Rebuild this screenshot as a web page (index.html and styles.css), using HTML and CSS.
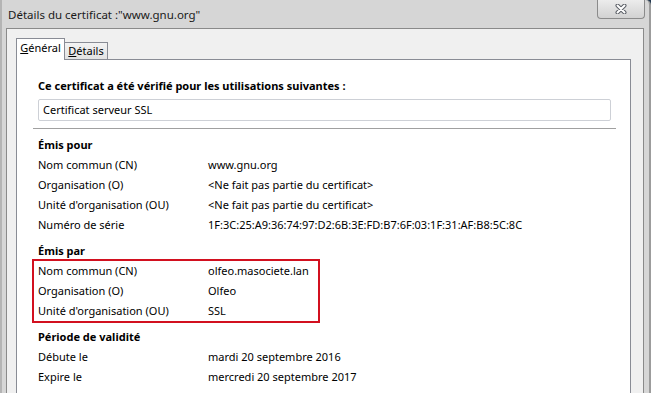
FILE: index.html
```html
<!DOCTYPE html>
<html>
  <head>
    <meta charset="UTF-8">
    <link rel="stylesheet" href="styles.css">
  </head>
  <body>
    <div class="window">
      <div class="titlebar">
        <span class="title">Détails du certificat :"www.gnu.org"</span>
        <div class="close">
          <svg width="12" height="10" viewBox="0 0 12 10">
            <path d="M2.5 1.5 L9.5 8.5 M9.5 1.5 L2.5 8.5" stroke="#5b5f66" stroke-width="4" stroke-linecap="round"/>
            <path d="M2.5 1.5 L9.5 8.5 M9.5 1.5 L2.5 8.5" stroke="#fff" stroke-width="2" stroke-linecap="round"/>
          </svg>
        </div>
      </div>

      <div class="client">
        <div class="tabs">
          <div class="tab active"><u>G</u>énéral</div>
          <div class="tab"><u>D</u>étails</div>
        </div>

        <div class="panel">
          <h3>Ce certificat a été vérifié pour les utilisations suivantes :</h3>
          <div class="usage">Certificat serveur SSL</div>
          <hr class="sep">

          <div class="group">
            <h3>Émis pour</h3>
            <div class="row"><span class="label">Nom commun (CN)</span><span>www.gnu.org</span></div>
            <div class="row"><span class="label">Organisation (O)</span><span>&lt;Ne fait pas partie du certificat&gt;</span></div>
            <div class="row"><span class="label">Unité d'organisation (OU)</span><span>&lt;Ne fait pas partie du certificat&gt;</span></div>
            <div class="row"><span class="label">Numéro de série</span><span>1F:3C:25:A9:36:74:97:D2:6B:3E:FD:B7:6F:03:1F:31:AF:B8:5C:8C</span></div>
          </div>

          <div class="group">
            <h3>Émis par</h3>
            <div class="highlight">
              <div class="row"><span class="label">Nom commun (CN)</span><span>olfeo.masociete.lan</span></div>
              <div class="row"><span class="label">Organisation (O)</span><span>Olfeo</span></div>
              <div class="row"><span class="label">Unité d'organisation (OU)</span><span>SSL</span></div>
            </div>
          </div>

          <div class="group">
            <h3>Période de validité</h3>
            <div class="row"><span class="label">Débute le</span><span>mardi 20 septembre 2016</span></div>
            <div class="row"><span class="label">Expire le</span><span>mercredi 20 septembre 2017</span></div>
          </div>
        </div>
      </div>
    </div>
  </body>
</html>
```

FILE: styles.css
```css
html, body {
  margin: 0;
  height: 100%;
}
body {
  background-color: #22384f;
  font-family: "Noto Sans", "Open Sans", sans-serif;
  font-size: 11px;
  color: #000;
}

.window {
  width: 651px;
  height: 393px;
  box-sizing: border-box;
  background-color: #d6d6d6;
  border-left: 2px solid #b4b4b4;
  border-right: 2px solid #9c9c9c;
  border-top-right-radius: 5px;
  overflow: hidden;
  display: flex;
  flex-direction: column;
}

.titlebar {
  height: 28px;
  flex-shrink: 0;
  display: flex;
  justify-content: space-between;
  align-items: flex-start;
  padding-left: 6px;
}
.title {
  padding-top: 5px;
  font-size: 11.5px;
  line-height: 20px;
  color: #1a1a1a;
}
.close {
  width: 46px;
  height: 18px;
  margin-right: 4px;
  border: 1px solid #8b8b8b;
  border-top: none;
  border-radius: 0 0 4px 4px;
  background: linear-gradient(#ececec, #d2d2d2);
  display: flex;
  align-items: center;
  justify-content: center;
}

.client {
  flex: 1;
  display: flex;
  flex-direction: column;
  margin: 0 5px 0 4px;
  border: 1px solid #8a8a8a;
  border-bottom: none;
  background-color: #f0f0f0;
  padding: 9px 12px 0 9px;
}

.tabs {
  display: flex;
  align-items: flex-end;
  height: 22px;
  margin-bottom: -1px;
  position: relative;
  z-index: 1;
}
.tab {
  box-sizing: border-box;
  width: 44px;
  height: 17px;
  margin-bottom: 1px;
  margin-left: -1px;
  border: 1px solid #898c95;
  border-bottom: none;
  background: linear-gradient(#f3f3f3, #e3e3e3);
  line-height: 16px;
  text-align: center;
}
.tab.active {
  width: 49px;
  height: 22px;
  margin: 0;
  background: #fff;
  line-height: 18px;
  position: relative;
  z-index: 2;
}

.panel {
  flex: 1;
  background-color: #fff;
  border: 1px solid #898c95;
  border-bottom: none;
  padding: 16px 19px 0 21px;
}

h3 {
  margin: 0;
  font-size: 11px;
  font-weight: bold;
  line-height: 20px;
}

.usage {
  box-sizing: border-box;
  height: 22px;
  margin-top: 3px;
  padding-left: 4px;
  border: 1px solid #cdd0d6;
  border-radius: 2px;
  line-height: 20px;
}

.sep {
  height: 0;
  margin: 7px -5px 0 -5px;
  border: none;
  border-top: 1px solid #a0a0a0;
}

.group {
  margin-top: 6px;
}
.row {
  display: flex;
  line-height: 20px;
  white-space: nowrap;
}
.label {
  width: 170px;
  flex-shrink: 0;
}

.highlight {
  box-sizing: border-box;
  width: 284px;
  margin-left: -4px;
  padding-left: 4px;
  outline: 2px solid #d2101f;
}
```
